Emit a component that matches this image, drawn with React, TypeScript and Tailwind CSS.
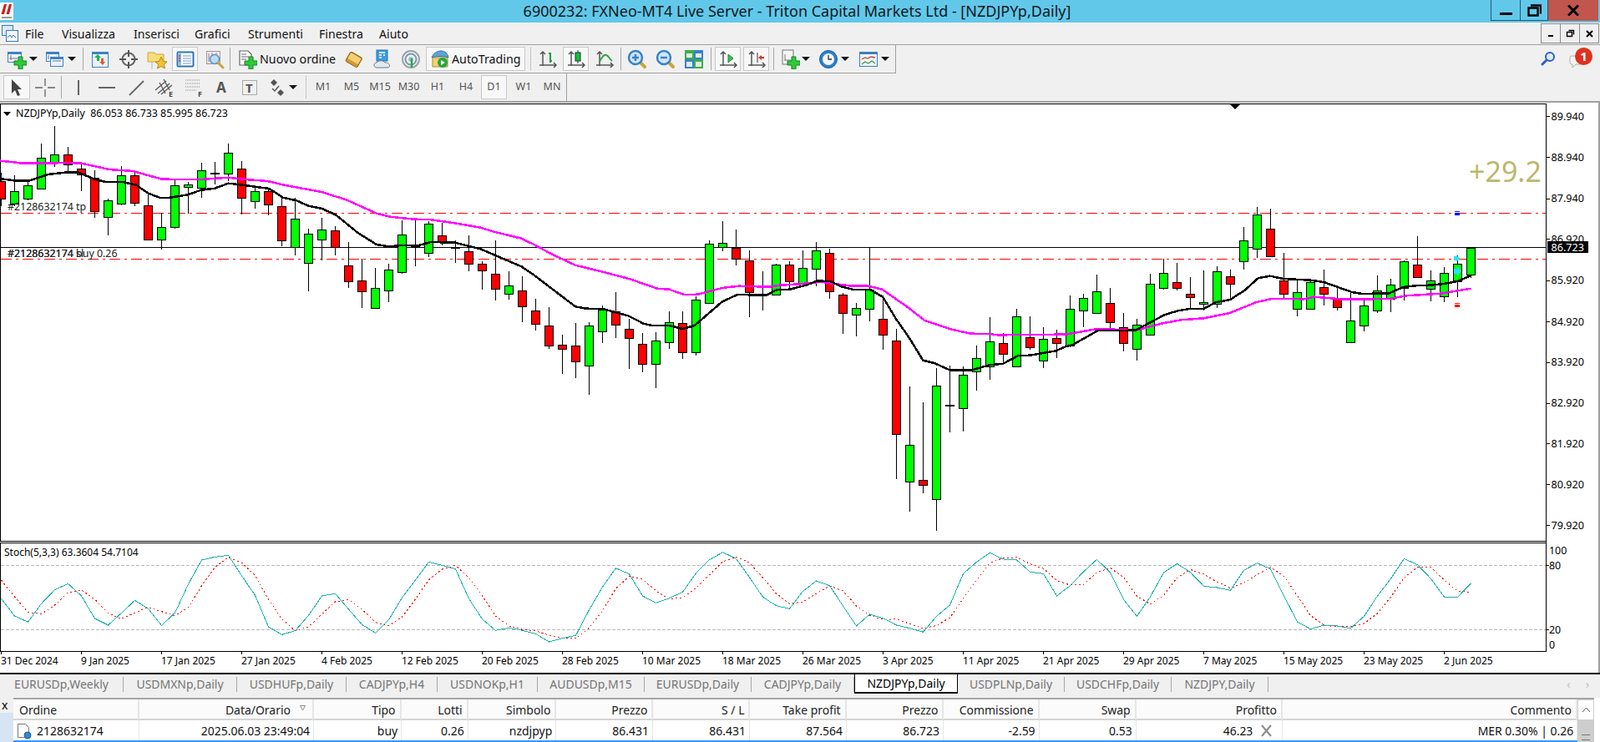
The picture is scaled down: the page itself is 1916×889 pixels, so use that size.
import React from "react";

type C = [number, number, number, number, string];
const A: C[] = [
[245,275,340,365,"r"],[255,313,358,365,"g"],[275,290,340,345,"g"],[140,193,304,304,"g"],[78,179,209,225,"g"],[153,179,217,250,"r"],[207,230,253,312,"r"],[237,263,385,407,"r"],[340,344,406,470,"g"],[222,256,358,362,"g"],
[247,256,355,365,"r"],[320,364,485,488,"r"],[390,442,485,523,"g"],[272,292,442,446,"g"],[278,289,296,392,"g"],[210,238,301,335,"g"],[207,248,248,288,"d"],[140,175,250,275,"g"],[204,232,337,395,"r"],[300,313,349,375,"g"],
[300,313,359,398,"r"],[335,367,490,510,"r"],[337,412,512,542,"g"],[447,466,569,671,"g"],[408,451,485,560,"g"],[438,454,514,542,"r"],[495,580,637,660,"r"],[556,634,673,731,"r"],[588,661,731,735,"g"],[573,595,670,711,"g"],
[417,469,602,608,"g"],[417,511,511,582,"d"],[420,430,535,548,"g"],[425,472,495,507,"r"],[490,516,516,570,"d"],[471,529,572,600,"r"],[565,574,596,666,"r"],[490,610,664,705,"r"],[600,652,682,701,"g"],[618,670,727,783,"r"],
];
const B: C[] = [
[354,397,445,467,"r"],[384,451,523,533,"r"],[483,520,533,623,"r"],[441,523,580,638,"r"],[438,451,595,698,"g"],[378,393,472,513,"g"],[330,400,448,494,"r"],[426,463,496,605,"r"],[477,517,587,617,"r"],[474,505,589,674,"g"],
[399,439,511,533,"g"],[399,442,547,569,"r"],[345,358,547,557,"g"],[144,157,370,370,"g"],[75,154,167,182,"g"],[105,170,209,233,"r"],[180,217,331,419,"r"],[255,340,340,395,"d"],[228,232,340,341,"g"],[220,232,290,320,"r"],
[180,244,296,310,"g"],[150,181,247,308,"g"],[175,190,328,353,"r"],[334,340,406,480,"r"],[369,388,412,488,"g"],[170,321,391,434,"g"],[357,427,484,536,"r"],[462,505,841,1001,"r"],[670,880,1012,1118,"g"],[727,1006,1024,1052,"r"],
[603,667,1075,1187,"g"],[594,737,737,833,"d"],[598,628,748,830,"g"],[522,568,616,684,"g"],[420,508,598,644,"g"],[477,514,553,587,"r"],[391,418,598,598,"g"],[417,493,529,536,"r"],[457,499,577,602,"g"],[465,496,514,566,"r"],
];
const D: C[] = [
[522,571,702,707,"g"],[516,532,577,635,"g"],[447,508,586,586,"g"],[495,550,619,640,"r"],[586,637,694,722,"r"],[606,628,715,755,"g"],[445,481,664,664,"g"],[391,442,496,500,"g"],[405,475,496,503,"r"],[456,517,529,570,"r"],
[432,547,553,575,"g"],[417,436,553,567,"g"],[429,454,479,537,"r"],[277,325,400,429,"g"],[204,232,355,388,"g"],[210,283,382,385,"r"],[369,469,517,532,"r"],[463,511,571,597,"g"],[465,475,571,572,"g"],[429,493,517,558,"r"],
[495,535,565,576,"r"],[511,613,691,691,"g"],[540,559,631,651,"g"],[450,505,577,584,"g"],[462,484,535,582,"g"],[397,400,496,540,"g"],[310,412,455,458,"r"],[432,469,499,542,"g"],[420,442,526,545,"g"],[379,409,472,527,"g"],[350,350,448,458,"g"],
];
const candles = [
  ...A.map((c) => [c[0] / 3 + 125, c[1] / 3 + 125, c[2] / 3 + 125, c[3] / 3 + 125, c[4]] as const),
  ...B.map((c) => [c[0] / 3 + 240, c[1] / 3 + 240, c[2] / 3 + 240, c[3] / 3 + 240, c[4]] as const),
  ...D.map((c) => [c[0] / 3 + 180, c[1] / 3 + 180, c[2] / 3 + 180, c[3] / 3 + 180, c[4]] as const),
];

const conv = (a: number[][], ox: number, oy: number) => a.map(([x, y]) => `${(ox + x / 2.45).toFixed(1)},${(oy + y / 3).toFixed(1)}`).join(" ");

const mag =
  conv([[0,203],[40,208],[65,212],[120,212],[200,210],[240,212],[320,234],[390,240],[475,269],[590,270],[670,263],[720,270],[785,276],[840,292],[945,315],[1020,345],[1105,392],[1145,404],[1215,413],[1260,414],[1340,428],[1410,443],[1450,458],[1530,482]], 0, 125) + " " +
  conv([[0,160],[50,193],[120,233],[200,257],[280,283],[360,317],[395,320],[440,339],[480,338],[550,315],[600,308],[690,311],[720,305],[780,301],[840,293],[930,308],[980,308],[1020,320],[1095,384],[1145,432],[1220,463],[1280,479],[1335,480],[1365,485],[1400,483]], 640, 240) + " " +
  conv([[0,662],[90,643],[210,646],[285,622],[340,610],[405,604],[480,586],[560,546],[605,534],[700,535],[730,527],[820,536],[950,534],[1000,523],[1100,515],[1190,497]], 1276, 180);

const blk =
  conv([[0,267],[40,274],[85,275],[140,252],[190,245],[230,245],[280,270],[310,279],[360,279],[400,290],[435,320],[470,336],[495,336],[550,325],[590,308],[630,302],[670,284],[700,288],[790,303],[830,335],[870,346],[905,365],[945,375],[985,397],[1050,462],[1105,504],[1140,511],[1180,507],[1225,508],[1265,495],[1335,497],[1410,520],[1450,541],[1530,583]], 0, 125) + " " +
  conv([[0,270],[120,382],[150,389],[200,390],[275,415],[320,443],[345,450],[395,450],[435,462],[470,450],[550,365],[595,339],[680,341],[710,322],[750,320],[800,304],[830,289],[870,292],[900,310],[935,321],[985,321],[1022,347],[1060,425],[1100,495],[1140,575],[1175,586],[1220,611],[1280,611],[1335,592],[1375,587],[1420,558],[1455,557],[1530,541]], 640, 240) + " " +
  conv([[0,706],[20,700],[95,648],[205,647],[290,592],[330,577],[365,570],[405,570],[440,547],[483,537],[525,504],[565,460],[600,452],[640,462],[720,467],[760,475],[840,510],[870,516],[950,514],[990,492],[1035,486],[1070,485],[1110,480],[1150,471],[1190,450]], 1276, 180);

const teal = [232,294,316,250,200,178,222,303,327,283,238,268,328,283,180,93,82,76,150,220,333,361,347,292,222,214,270,325,355,308,228,165,100,112,125,232,305,346,337,346,358,387,374,364,272,190,122,143,222,247,230,208,140,92,65,88,155,226,257,268,205,168,185,258,330,288,302,327,338,352,295,255,142,100,67,90,93,136,142,222,185,135,91,138,235,295,225,138,106,137,187,192,202,130,104,125,222,315,341,327,330,338,295,222,160,88,110,160,226,226,177];
const sig = teal.map((v, k) => (k === 0 ? 165 : k === 1 ? 225 : (v + teal[k - 1] + teal[k - 2]) / 3));
const stochPts = (a: number[]) => a.map((v, k) => `${1.5 + 16 * k},${(640 + v / 3).toFixed(1)}`).join(" ");

const dates = ["31 Dec 2024","9 Jan 2025","17 Jan 2025","27 Jan 2025","4 Feb 2025","12 Feb 2025","20 Feb 2025","28 Feb 2025","10 Mar 2025","18 Mar 2025","26 Mar 2025","3 Apr 2025","11 Apr 2025","21 Apr 2025","29 Apr 2025","7 May 2025","15 May 2025","23 May 2025","2 Jun 2025"];
const prices: [string, number][] = [["89.940",139],["88.940",188],["87.940",237.5],["86.920",286],["85.920",335.7],["84.920",385],["83.920",433.5],["82.920",482.6],["81.920",531],["80.920",580],["79.920",629]];

function Chart() {
  return (
    <svg width={1916} height={685} viewBox="0 121 1916 685" className="block bg-white">
      <line x1={0} x2={1916} y1={122} y2={122} stroke="#a0a0a0" strokeWidth={2} />
      <g shapeRendering="crispEdges" stroke="#000" fill="none">
        <path d="M0.5 125V648M0 124.5H1852M1851.5 124V780M0 648.5H1852M0 650.5H1852M0.5 650V780M0 780.5H1852" />
      </g>
      <polygon points="1473,125 1485,125 1479,131" fill="#000" />
      <polygon points="4,134 13,134 8.5,139" fill="#000" />
      <text x={19} y={140} fontSize={12.4}>NZDJPYp,Daily&#160;&#160;86.053 86.733 85.995 86.723</text>
      <g fill="none" stroke="#ff0000" shapeRendering="crispEdges">
        <line x1={1} x2={1851} y1={255.5} y2={255.5} strokeDasharray="13 5 3 5" />
        <line x1={1} x2={1851} y1={310.5} y2={310.5} strokeDasharray="13 5 3 5" />
      </g>
      <line x1={1} x2={1851} y1={296.5} y2={296.5} stroke="#000" shapeRendering="crispEdges" />
      <g shapeRendering="crispEdges">
        {candles.map((c, i) => {
          const x = 1.5 + 16 * i;
          const top = Math.round(c[1]) + 0.5;
          const bot = Math.round(c[2]) + 0.5;
          if (c[4] === "d")
            return (
              <g key={i} stroke="#000">
                <line x1={x} x2={x} y1={c[0]} y2={c[3]} />
                <rect x={x - 5} y={top - 1} width={10} height={1} fill="#000" />
              </g>
            );
          return (
            <g key={i} stroke="#000">
              <line x1={x} x2={x} y1={Math.round(c[0])} y2={Math.round(c[3])} />
              <rect x={x - 5} y={top} width={10} height={Math.max(bot - top, 2)} fill={c[4] === "g" ? "#00ff00" : "#ff0000"} />
            </g>
          );
        })}
      </g>
      <polyline points={mag} fill="none" stroke="#ff00ff" strokeWidth={2.5} shapeRendering="crispEdges" />
      <polyline points={blk} fill="none" stroke="#000" strokeWidth={2.5} shapeRendering="crispEdges" />
      <g fontSize={12.4} fill="#222">
        <text x={9} y={252}>#2128632174 tp</text>
        <text x={9} y={308}>#2128632174 sl</text>
        <text x={9} y={308}>#2128632174 buy 0.26</text>
      </g>
      <g shapeRendering="crispEdges">
        <rect x={1742} y={253} width={6} height={1} fill="#0000ff" />
        <rect x={1742} y={255} width={6} height={3} fill="#0000ff" />
        <rect x={1742} y={363} width={6} height={1} fill="#ff0000" />
        <rect x={1742} y={365} width={6} height={3} fill="#ff0000" />
      </g>
      <polygon points="1741,307 1744,307 1744,305 1748,310 1744,314 1744,312 1741,312" fill="#22e6f0" />
      <polygon points="1741,322 1745,322 1745,319 1750,325 1745,331 1745,328 1741,328" fill="#22e6f0" />
      <text x={1759} y={218} fontSize={34} fill="#bdb76b">+29.2</text>
      {prices.map(([p, y]) => (
        <g key={p}>
          <line x1={1852} x2={1856} y1={Math.round(y) + 0.5} y2={Math.round(y) + 0.5} stroke="#000" shapeRendering="crispEdges" />
          <text x={1857.5} y={y + 4.5} fontSize={12.6}>{p}</text>
        </g>
      ))}
      <rect x={1853} y={289} width={49} height={14} fill="#000" />
      <text x={1857.5} y={300.5} fontSize={12.6} fill="#fff">86.723</text>
      <text x={5} y={665.5} fontSize={12}>Stoch(5,3,3) 63.3604 54.7104</text>
      <g stroke="#b8b8b8" strokeDasharray="4 2" shapeRendering="crispEdges">
        <line x1={1} x2={1851} y1={677.5} y2={677.5} />
        <line x1={1} x2={1851} y1={754.5} y2={754.5} />
      </g>
      <polyline points={stochPts(sig)} fill="none" stroke="#ff0000" strokeDasharray="2 3" shapeRendering="crispEdges" />
      <polyline points={stochPts(teal)} fill="none" stroke="#20b2aa" shapeRendering="crispEdges" />
      {[["100",664],["80",682],["20",759],["0",777]].map(([t, y]) => (
        <text key={t} x={1855} y={Number(y)} fontSize={12.4}>{t}</text>
      ))}
      <g stroke="#000" shapeRendering="crispEdges">
        <line x1={1851} x2={1855} y1={677.5} y2={677.5} />
        <line x1={1851} x2={1855} y1={754.5} y2={754.5} />
        {dates.map((_, i) => (
          <line key={i} x1={96 * i + 1.5} x2={96 * i + 1.5} y1={780} y2={784} />
        ))}
      </g>
      {dates.map((d, i) => (
        <text key={d} x={96 * i + 1} y={796} fontSize={12}>{d}</text>
      ))}
      <line x1={1915} x2={1915} y1={122} y2={806} stroke="#a0a0a0" strokeWidth={2} />
    </svg>
  );
}

const Sv = ({ w = 24, h = 24, children }: { w?: number; h?: number; children: React.ReactNode }) => (
  <svg width={w} height={h} viewBox={`0 0 ${w} ${h}`} className="block shrink-0">{children}</svg>
);
const Plus = ({ x = 0, y = 0 }: { x?: number; y?: number }) => (
  <path transform={`translate(${x} ${y})`} d="M5 0h5v5h5v5h-5v5H5v-5H0V5h5z" fill="#2fcb37" stroke="#15802a" />
);
const Win = ({ x, y, w, h }: { x: number; y: number; w: number; h: number }) => (
  <g>
    <rect x={x + 0.5} y={y + 0.5} width={w} height={h} fill="#eaf2fb" stroke="#3d82c4" />
    <rect x={x} y={y} width={w + 1} height={3} fill="#3d82c4" />
  </g>
);
const Axes = () => <path d="M6 3v17M2 19h20M3 6l3-3 3 3M19 16l3 3-3 3" stroke="#555" strokeWidth={1.5} fill="none" />;
const Caret = () => <svg width={10} height={6} viewBox="0 0 10 6" className="block"><polygon points="0,0 10,0 5,5" fill="#111" /></svg>;

const Tool = ({ className, active, children }: { className: string; active?: boolean; children?: React.ReactNode }) => (
  <div className={`flex items-center justify-center shrink-0 h-[29px] ${active ? "border border-[#c8c8c8] bg-[#f8f8f8]" : ""} ${className}`}>{children}</div>
);
const Sep = ({ className }: { className: string }) => <div className={`w-px h-[27px] bg-[#a8a8a8] shrink-0 ${className}`} />;

const Lens = ({ kind }: { kind: "+" | "-" }) => (
  <Sv>
    <path d="M15 15l6 6" stroke="#c9a53a" strokeWidth={4} strokeLinecap="round" />
    <circle cx={10} cy={10} r={8} fill="#cfe6f8" stroke="#3a83c4" strokeWidth={2.5} />
    <path d={kind === "+" ? "M6 10h8M10 6v8" : "M6 10h8"} stroke="#3a83c4" strokeWidth={2.5} />
  </Sv>
);

function Toolbar1() {
  return (
    <div className="flex items-center h-[34px] border-b border-[#a0a0a0] w-[1073px] border-r pl-[6px]">
      <Tool className="w-[28px]">
        <Sv><Win x={1} y={3} w={16} h={12} /><path d="M5 7v6M3 11h10" stroke="#777" /><Plus x={9} y={9} /></Sv>
      </Tool>
      <Tool className="w-[12px]"><Caret /></Tool>
      <Tool className="w-[28px] ml-[6px]">
        <Sv><Win x={1} y={3} w={15} h={11} /><Win x={6} y={9} w={15} h={11} /><path d="M4 7v5M9 14h10" stroke="#777" /></Sv>
      </Tool>
      <Tool className="w-[12px]"><Caret /></Tool>
      <Sep className="ml-[7px]" />
      <Tool className="w-[32px] ml-[4px]">
        <Sv><Win x={2} y={3} w={19} h={18} /><path d="M9 6l4 4h-2v4H8v-4H5z" fill="#22b14c" /><path d="M15 19l-4-4h2v-4h3v4h2z" fill="#e9582b" /></Sv>
      </Tool>
      <Tool className="w-[32px] ml-[2px]">
        <Sv><circle cx={12} cy={12} r={7.5} fill="none" stroke="#666" strokeWidth={2} /><path d="M12 1v8M12 15v8M1 12h8M15 12h8" stroke="#555" strokeWidth={2} /></Sv>
      </Tool>
      <Tool className="w-[32px] ml-[2px]">
        <Sv><path d="M1 4h8l2 2h9v9H1z" fill="#f7dd7a" stroke="#c9a63f" /><polygon points="17,9 19.5,14.5 24,15 20.5,18.5 21.5,23 17,20.5 12.5,23 13.5,18.5 10,15 14.5,14.5" fill="#f2c230" stroke="#b58a1c" /><path d="M6 16v7" stroke="#777" strokeDasharray="1 1" /></Sv>
      </Tool>
      <Tool active className="w-[31px] ml-[2px]">
        <Sv><rect x={2.5} y={3.5} width={19} height={17} rx={1} fill="#fff" stroke="#2f74b5" strokeWidth={2} /><rect x={3} y={4} width={4} height={16} fill="#8ebde8" /><path d="M9 8h10M9 11h10M9 14h10M9 17h10" stroke="#6a9ccb" /><path d="M4 8h2M4 11h2M4 14h2" stroke="#d33" strokeWidth={1.5} /></Sv>
      </Tool>
      <Tool className="w-[32px] ml-[4px]">
        <Sv><rect x={2.5} y={2.5} width={16} height={15} fill="#f2ecec" stroke="#999" /><path d="M5 5v10M9 4v9M14 4v8" stroke="#a77" /><circle cx={12} cy={12} r={5.5} fill="#bcdcf5" stroke="#5a95c8" strokeWidth={1.5} /><path d="M16 16l6 6" stroke="#c9a53a" strokeWidth={3} strokeLinecap="round" /></Sv>
      </Tool>
      <Sep className="ml-[2px]" />
      <Tool className="ml-[8px] w-[120px] justify-start">
        <Sv><path d="M3 2h10l4 4v13H3z" fill="#fff" stroke="#666" strokeWidth={1.2} /><path d="M5 6h6M5 9h9M5 12h6" stroke="#666" /><Plus x={9} y={9} /></Sv>
        <span className="text-[15px] ml-[3px] text-[#111] whitespace-nowrap inline-block origin-left scale-x-[.95]">Nuovo ordine</span>
      </Tool>
      <Tool className="w-[32px] ml-[4px]">
        <Sv><g transform="rotate(30 12 12)"><rect x={4} y={6} width={16} height={13} rx={2} fill="#d39a2f" stroke="#8f6518" /><rect x={5} y={7} width={14} height={8} rx={1} fill="#f4cf77" /></g></Sv>
      </Tool>
      <Tool className="w-[32px] ml-[2px]">
        <Sv><rect x={5} y={1} width={13} height={13} fill="#3d9be0" stroke="#2574b4" /><path d="M8 4h7M8 7h3M13 7h2M8 10h3" stroke="#fff" strokeWidth={1.3} /><path d="M5 22c-4 0-4-6 0-6 2-3 8-3 10 0 5-1 8 6 3 6z" fill="#e3e8ee" stroke="#6c7a8a" /></Sv>
      </Tool>
      <Tool className="w-[32px] ml-[2px]">
        <Sv><circle cx={12} cy={12} r={10} fill="#eef2f4" stroke="#9aa5ad" strokeWidth={2} /><circle cx={12} cy={12} r={6.5} fill="none" stroke="#7e98a8" strokeWidth={2} /><circle cx={12} cy={12} r={3} fill="#9dc0d4" /><path d="M13 11v11" stroke="#2ca84a" strokeWidth={2.5} /></Sv>
      </Tool>
      <Tool active className="w-[119px] ml-[2px] justify-start pl-[4px]">
        <Sv><path d="M3 10h18v11H3z" fill="#f3d36c" stroke="#ab8b2e" /><path d="M2 10c4-2 16-2 20 0-1-5-4-8-9-8S4 5 2 10z" fill="#5ea4d8" stroke="#2f6fa6" /><circle cx={15} cy={16} r={6} fill="#23a83f" /><polygon points="13,13 13,19 18,16" fill="#fff" /></Sv>
        <span className="text-[15px] ml-[2px] text-[#111] whitespace-nowrap inline-block origin-left scale-x-[.95]">AutoTrading</span>
      </Tool>
      <div className="w-[3px] h-[27px] ml-[6px] border-l border-dotted border-[#999] shrink-0" />
      <Tool className="w-[32px] ml-[2px]">
        <Sv><Axes /><path d="M15 4v12M13 5h2M15 14h2" stroke="#22a03a" strokeWidth={2} fill="none" /></Sv>
      </Tool>
      <Tool active className="w-[31px] ml-[2px]">
        <Sv><Axes /><path d="M14 1v16" stroke="#333" /><rect x={11} y={4} width={6} height={10} fill="#12c42c" stroke="#135" /></Sv>
      </Tool>
      <Tool className="w-[32px] ml-[3px]">
        <Sv><Axes /><path d="M6 15c3-6 5-9 8-8s4 5 7 7" stroke="#3aa04d" strokeWidth={2} fill="none" /></Sv>
      </Tool>
      <Sep className="ml-[3px]" />
      <Tool className="w-[32px] ml-[3px]"><Lens kind="+" /></Tool>
      <Tool className="w-[32px] ml-[2px]"><Lens kind="-" /></Tool>
      <Tool className="w-[32px] ml-[2px]">
        <Sv><rect x={1} y={1} width={11} height={11} fill="#3dae4e" /><rect x={12} y={1} width={11} height={11} fill="#3b7fd0" /><rect x={1} y={12} width={11} height={11} fill="#3b7fd0" /><rect x={12} y={12} width={11} height={11} fill="#3dae4e" /><path d="M3 5h7v5H3zM14 5h7v5h-7zM3 15h7v6H3zM14 15h7v6h-7z" fill="#dff0e0" /></Sv>
      </Tool>
      <Sep className="ml-[4px]" />
      <Tool active className="w-[31px] ml-[4px]">
        <Sv><Axes /><polygon points="12,6 18,11 12,16" fill="#3dbb59" stroke="#1f8a38" /></Sv>
      </Tool>
      <Tool active className="w-[31px] ml-[3px]">
        <Sv><Axes /><path d="M13 4v12" stroke="#333" /><path d="M21 10h-6" stroke="#d9342b" strokeWidth={2} /><polygon points="14,10 18,7 18,13" fill="#d9342b" /></Sv>
      </Tool>
      <Sep className="ml-[5px]" />
      <Tool className="w-[26px] ml-[6px]">
        <Sv><rect x={3} y={1} width={13} height={17} fill="#f5f5f5" stroke="#777" /><path d="M6 6v8M6 13h7" stroke="#777" /><Plus x={9} y={9} /></Sv>
      </Tool>
      <Tool className="w-[12px]"><Caret /></Tool>
      <Tool className="w-[28px] ml-[7px]">
        <Sv><circle cx={12} cy={12} r={10.5} fill="#2c80cf" stroke="#1a5d9e" /><circle cx={12} cy={12} r={7} fill="#f4f6f8" /><path d="M12 7v5h4" stroke="#333" strokeWidth={1.3} fill="none" /></Sv>
      </Tool>
      <Tool className="w-[12px]"><Caret /></Tool>
      <Tool className="w-[28px] ml-[8px]">
        <Sv><rect x={1.5} y={3.5} width={21} height={17} fill="#eef3f8" stroke="#3d7fb8" /><rect x={1} y={3} width={22} height={3} fill="#3d7fb8" /><path d="M4 12l4-2 3 1 4-2 5 1" stroke="#c8452f" fill="none" strokeWidth={1.3} /><path d="M4 18l4-3 4 2 4-3 4 3" stroke="#3aa04d" fill="none" strokeWidth={1.3} /></Sv>
      </Tool>
      <Tool className="w-[12px]"><Caret /></Tool>
    </div>
  );
}

const Tf = ({ t, active, className }: { t: string; active?: boolean; className: string }) => (
  <div className={`flex items-center justify-center h-[29px] text-[12.5px] text-[#555] shrink-0 ${active ? "border border-[#c8c8c8] bg-[#f8f8f8]" : ""} ${className}`}>{t}</div>
);

function Toolbar2() {
  return (
    <div className="flex items-center h-[33px] w-[679px] border-r border-[#a0a0a0] pl-[4px]">
      <Tool active className="w-[32px]">
        <svg width={16} height={22} viewBox="0 0 16 22"><path d="M2 1v17l4-4 3 7 3-1-3-7h5z" fill="#444" /></svg>
      </Tool>
      <Tool className="w-[34px] ml-[1px]">
        <Sv><path d="M12 1v9M12 14v9M0 12h9M15 12h9" stroke="#666" strokeWidth={1.3} /></Sv>
      </Tool>
      <Sep className="ml-[2px]" />
      <Tool className="w-[34px] ml-[3px]"><Sv><path d="M12 3v18" stroke="#666" strokeWidth={2} /></Sv></Tool>
      <Tool className="w-[34px]"><Sv><path d="M2 12h20" stroke="#666" strokeWidth={2} /></Sv></Tool>
      <Tool className="w-[34px] ml-[1px]"><Sv><path d="M4 21L21 4" stroke="#666" strokeWidth={1.8} /></Sv></Tool>
      <Tool className="w-[34px]">
        <Sv w={28} h={28}><path d="M3 17L16 6M6 21L20 9M10 22L23 11M8 8l7 13M13 4l7 13" stroke="#555" strokeWidth={1.2} /><text x={19} y={25} fontSize={9} fontWeight={700} fill="#444">E</text></Sv>
      </Tool>
      <Tool className="w-[34px]">
        <Sv w={28} h={28}><path d="M5 5h18M5 9h18M5 13h18M5 17h14" stroke="#888" strokeDasharray="1 1" /><text x={20} y={25} fontSize={9} fontWeight={700} fill="#444">F</text></Sv>
      </Tool>
      <Tool className="w-[34px]"><span className="text-[17px] font-bold text-[#555]">A</span></Tool>
      <Tool className="w-[34px]">
        <Sv><rect x={3.5} y={3.5} width={17} height={17} fill="none" stroke="#666" strokeDasharray="1 1" /><text x={7} y={18} fontSize={15} fontWeight={700} fill="#555">T</text></Sv>
      </Tool>
      <Tool className="w-[28px] ml-[2px]">
        <Sv><path d="M8 2l4 4-4 4-4-4z" fill="#555" /><path d="M16 14l4 4-4 4-4-4z" fill="#555" /><path d="M6 13l3 3 5-6" stroke="#555" fill="none" strokeWidth={1.5} /></Sv>
      </Tool>
      <Tool className="w-[10px]"><Caret /></Tool>
      <div className="w-[3px] h-[27px] ml-[10px] border-l border-dotted border-[#999] shrink-0" />
      <Tf t="M1" className="w-[34px] ml-[1px]" />
      <Tf t="M5" className="w-[34px]" />
      <Tf t="M15" className="w-[34px]" />
      <Tf t="M30" className="w-[35px]" />
      <Tf t="H1" className="w-[34px]" />
      <Tf t="H4" className="w-[34px]" />
      <Tf t="D1" active className="w-[31px] ml-[1px]" />
      <Tf t="W1" className="w-[36px] ml-[2px]" />
      <Tf t="MN" className="w-[32px]" />
    </div>
  );
}

const tabs: [string, string][] = [
  ["EURUSDp,Weekly", "w-[148px]"],
  ["USDMXNp,Daily", "w-[136px]"],
  ["USDHUFp,Daily", "w-[131px]"],
  ["CADJPYp,H4", "w-[109px]"],
  ["USDNOKp,H1", "w-[120px]"],
  ["AUDUSDp,M15", "w-[128px]"],
  ["EURUSDp,Daily", "w-[128px]"],
  ["CADJPYp,Daily", "w-[123px]"],
  ["NZDJPYp,Daily", "w-[124px]"],
  ["USDPLNp,Daily", "w-[128px]"],
  ["USDCHFp,Daily", "w-[128px]"],
  ["NZDJPY,Daily", "w-[116px]"],
];

function Tabs() {
  return (
    <div className="flex items-start h-[30px] border-t-2 border-black bg-[#f0f0f0] relative">
      {tabs.map(([t, w]) =>
        t === "NZDJPYp,Daily" ? (
          <div key={t} className={`${w} h-[23px] flex items-center justify-center bg-white border-x border-b-2 border-black text-[15px] text-black shrink-0`}>
            <span className="inline-block scale-x-[.93] whitespace-nowrap">{t}</span>
          </div>
        ) : (
          <div key={t} className={`${w} h-[23px] flex items-center justify-center text-[15px] text-[#757575] shrink-0`}>
            <span className="flex-1 text-center scale-x-[.93] whitespace-nowrap">{t}</span>
            <span className="w-px h-[18px] bg-[#a8a8a8] shrink-0" />
          </div>
        )
      )}
      <div className="flex-1 flex justify-end items-center h-[23px] gap-[18px] pr-[13px] text-[#c0c0c0] text-[14px]">
        <span>‹</span>
        <span>›</span>
      </div>
    </div>
  );
}

const cols = ["Data/Orario", "Tipo", "Lotti", "Simbolo", "Prezzo", "S / L", "Take profit", "Prezzo", "Commissione", "Swap", "Profitto", "Commento"];
const vals = ["2025.06.03 23:49:04", "buy", "0.26", "nzdjpyp", "86.431", "86.431", "87.564", "86.723", "-2.59", "0.53", "46.23", "MER 0.30% | 0.26"];
const grid = "grid grid-cols-[151px_209px_105px_80px_105px_116px_116px_116px_116px_115px_116px_175px_353px]";

function Table() {
  return (
    <div className="flex h-[53px] bg-[#f0f0f0] overflow-hidden">
      <div className="w-[16px] shrink-0 flex flex-col">
        <div className="h-[18px] text-[14px] leading-[18px] pl-[2px] text-black">x</div>
        <div className="flex-1 bg-[#d6e4f4]" />
      </div>
      <div className="w-[1873px] shrink-0 flex flex-col bg-white border-t-2 border-[#a6a6a6]">
        <div className={`${grid} h-[25px] bg-[#fbfbfb] border-b-2 border-[#d4d4d4]`}>
          <div className="pl-[7px] pt-[1px] flex items-center text-[15px] border-r-2 border-[#e6e6e6] text-[#222]">
            <span className="inline-block origin-left scale-x-[.93]">Ordine</span>
          </div>
          {cols.map((c, i) => (
            <div key={i} className="flex items-center justify-end pr-[5px] pt-[1px] text-[15px] border-r-2 border-[#e6e6e6] text-[#222]">
              <span className="inline-block origin-right scale-x-[.93] whitespace-nowrap">{c}</span>
              {i === 0 && (
                <svg width={7} height={7} viewBox="0 0 7 7" className="ml-[11px] mr-[3px] mb-[3px]"><path d="M0.5 0.5h6L3.5 6z" fill="none" stroke="#888" /></svg>
              )}
            </div>
          ))}
        </div>
        <div className={`${grid} h-[24px] bg-white`}>
          <div className="flex items-center text-[15px] pl-[4px] pt-[1px] border-r border-[#e6e6e6] text-[#111]">
            <svg width={19} height={20} viewBox="0 0 19 20" className="shrink-0">
              <path d="M1.5 1.5h9l4 4v12h-13z" fill="#fff" stroke="#777" />
              <circle cx={13} cy={15} r={4} fill="#2f86d6" stroke="#1b5d9e" />
            </svg>
            <span className="ml-[5px] inline-block origin-left scale-x-[.93]">2128632174</span>
          </div>
          {vals.map((v, i) => (
            <div key={i} className="flex items-center justify-end pr-[4px] pt-[1px] text-[15px] border-r border-[#e6e6e6] text-[#111]">
              <span className="inline-block origin-right scale-x-[.93] whitespace-nowrap">{v}</span>
              {i === 10 && (
                <svg width={13} height={15} viewBox="0 0 13 15" className="ml-[10px] mr-[8px]"><path d="M1 1l11 13M12 1L1 14" stroke="#8a8a8a" strokeWidth={2} /></svg>
              )}
            </div>
          ))}
        </div>
        <div className="h-[2px] bg-[#3399ff]" />
      </div>
      <div className="w-[20px] shrink-0 flex flex-col border-t-2 border-[#a6a6a6]">
        <div className="h-[25px] bg-white border border-[#d0d0d0] flex items-center justify-center">
          <svg width={11} height={7} viewBox="0 0 11 7"><path d="M1 6l4.5-5L10 6" fill="none" stroke="#555" /></svg>
        </div>
        <div className="flex-1 bg-[#cdcdcd] flex items-end justify-center pb-[2px]">
          <div className="w-[10px] h-[7px] border-y border-[#777]" />
        </div>
      </div>
      <div className="flex-1 bg-white" />
    </div>
  );
}

const menus: [string, string][] = [
  ["File", "w-[44px]"],
  ["Visualizza", "w-[86px]"],
  ["Inserisci", "w-[73px]"],
  ["Grafici", "w-[64px]"],
  ["Strumenti", "w-[85px]"],
  ["Finestra", "w-[72px]"],
  ["Aiuto", "w-[50px]"],
];

export default function App() {
  return (
    <div className="w-[1916px] h-[889px] overflow-hidden bg-[#f0f0f0] font-['Liberation_Sans',Arial,sans-serif] text-black">
      <div className="flex items-start h-[27px] bg-[#62c8ea]">
        <div className="w-[130px] shrink-0 pt-[3px]">
          <div className="w-[16px] h-[21px] bg-white flex flex-col items-center justify-center">
            <svg width={14} height={13} viewBox="0 0 14 13"><path d="M4 0L0.5 12H4L7 0zM10 0L6.5 12H10l3-12z" fill="#c8201e" /></svg>
            <div className="w-[12px] h-[2px] mt-[2px] bg-[#9a9a9a]" />
          </div>
        </div>
        <div className="flex-1 text-center text-[18px] leading-[27px] text-[#101820] whitespace-nowrap pr-[6px]">6900232: FXNeo-MT4 Live Server - Triton Capital Markets Ltd - [NZDJPYp,Daily]</div>
        <div className="flex w-[131px] shrink-0 h-[25px]">
          <div className="w-[36px] border border-t-0 border-[#24586c] flex items-end justify-center pb-[6px]">
            <div className="w-[15px] h-[3px] bg-black" />
          </div>
          <div className="w-[33px] border-b border-r border-[#24586c] flex items-center justify-center">
            <svg width={17} height={15} viewBox="0 0 17 15"><path d="M4 1.5h12v10M1.5 4.5h11v9h-11z" fill="none" stroke="#000" strokeWidth={2.4} /></svg>
          </div>
          <div className="w-[60px] bg-[#c0564e] flex items-center justify-center">
            <svg width={14} height={13} viewBox="0 0 14 13"><path d="M1 0.5L13 12.5M13 0.5L1 12.5" stroke="#000" strokeWidth={3} /></svg>
          </div>
        </div>
      </div>
      <div className="flex items-center h-[27px] border-b border-[#a0a0a0] text-[15px] text-[#111]">
        <svg width={22} height={22} viewBox="0 0 22 22" className="ml-[1px] mr-[7px] shrink-0">
          <rect x={1.5} y={1.5} width={13} height={12} fill="#dce9f8" stroke="#3d78b8" />
          <rect x={6.5} y={7.5} width={14} height={13} fill="#f4f8fd" stroke="#3d78b8" />
          <path d="M8 16l3-3 2 3 2-3 3 3" stroke="#3a73b2" fill="none" />
        </svg>
        {menus.map(([m, w]) => (
          <span key={m} className={`${w} shrink-0 inline-block origin-left scale-x-[.94]`}>{m}</span>
        ))}
        <div className="flex ml-auto mr-[1px]">
          {["min", "res", "cls"].map((k) => (
            <div key={k} className="w-[24px] h-[24px] border border-[#8a8a8a] flex items-center justify-center -ml-px">
              <svg width={11} height={11} viewBox="0 0 11 11">
                {k === "min" && <rect x={2} y={7} width={6} height={2} fill="#000" />}
                {k === "res" && <path d="M3.5 1.5h6v5M1.5 3.5h6v5h-6z" fill="none" stroke="#000" strokeWidth={1.4} />}
                {k === "cls" && <path d="M2 2l7 7M9 2L2 9" stroke="#000" strokeWidth={2} />}
              </svg>
            </div>
          ))}
        </div>
      </div>
      <div className="relative h-[34px]">
        <Toolbar1 />
        <div className="absolute right-[9px] top-[1px] flex items-center gap-[16px] h-[30px]">
          <svg width={18} height={18} viewBox="0 0 18 18"><circle cx={11} cy={7} r={5} fill="#dfeafa" stroke="#2f5fc0" strokeWidth={2} /><path d="M7 11l-5 5" stroke="#2f5fc0" strokeWidth={3} strokeLinecap="round" /></svg>
          <div className="relative w-[28px] h-[28px]">
            <svg width={20} height={18} viewBox="0 0 20 18" className="absolute left-0 bottom-[1px]"><path d="M3 2h13a2 2 0 012 2v6a2 2 0 01-2 2H8l-4 4v-4H3a2 2 0 01-2-2V4a2 2 0 012-2z" fill="#f4f4f4" stroke="#b0b0b0" /></svg>
            <div className="absolute right-0 top-[1px] w-[21px] h-[21px] rounded-full bg-[#e0301e] text-white text-[15px] font-bold flex items-center justify-center">1</div>
          </div>
        </div>
      </div>
      <Toolbar2 />
      <Chart />
      <Tabs />
      <Table />
    </div>
  );
}
